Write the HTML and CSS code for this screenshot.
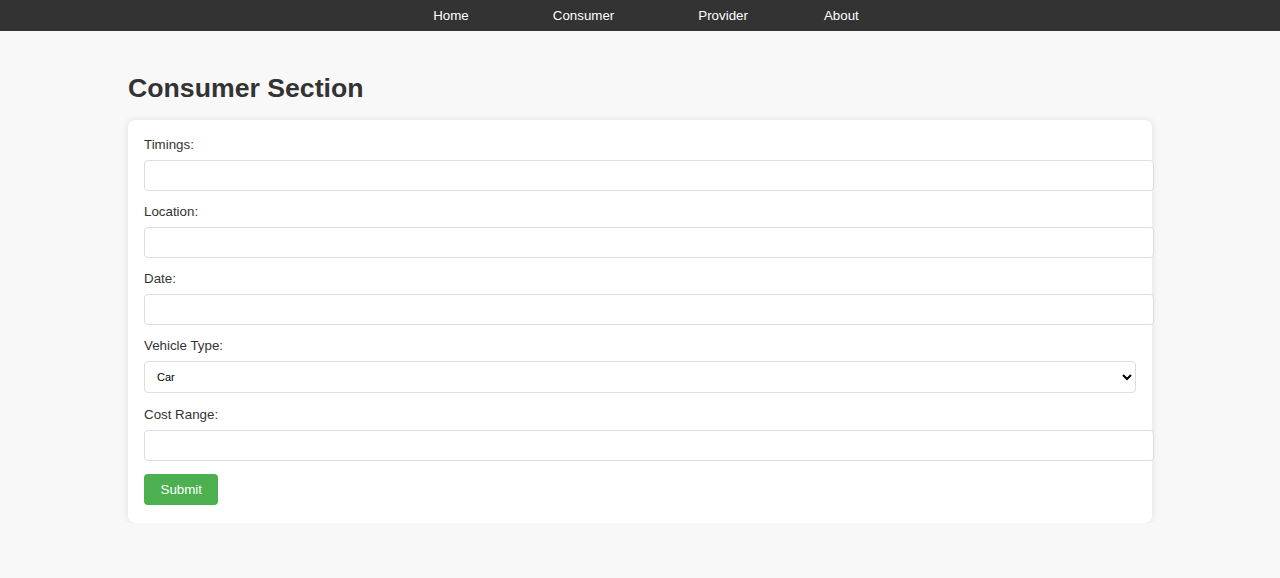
FILE: index.html
```html
<!DOCTYPE html>
<html lang="en">
<head>
    <meta charset="UTF-8">
    <meta name="viewport" content="width=device-width, initial-scale=1.0">
    <title>Consumer Section</title>
    <link rel="stylesheet" href="styles.css">
</head>
<body>
    <nav class="navbar">
        <ul class="nav-links">
            <li><a href="#">Home</a></li>
            <li><a href="#">Consumer</a></li>
            <li><a href="#">Provider</a></li>
            <li class="last"><a href="#">About</a></li>
        </ul>
    </nav>
    <main class="container">
        <h1>Consumer Section</h1>
        <form class="card">
            <label for="timings">Timings:</label>
            <input type="text" id="timings" name="timings">

            <label for="location">Location:</label>
            <input type="text" id="location" name="location">

            <label for="date">Date:</label>
            <input type="text" id="date" name="date">

            <label for="vehicle">Vehicle Type:</label>
            <select id="vehicle" name="vehicle">
                <option>Car</option>
                <option>Bike</option>
                <option>Truck</option>
            </select>

            <label for="cost">Cost Range:</label>
            <input type="text" id="cost" name="cost" class="last-input">

            <button type="submit" class="submit-btn">Submit</button>
        </form>
    </main>
</body>
</html>
```

FILE: styles.css
```css
* {
    margin: 0;
    padding: 0;
}
body {
    background-color: #f8f8f8;
    font-family: "Liberation Sans", Arial, sans-serif;
    font-size: 13.33px;
    color: #333;
}
.navbar {
    background-color: #333;
    height: 31px;
    display: flex;
    align-items: center;
    justify-content: center;
}
.nav-links {
    list-style: none;
    display: flex;
    gap: 84px;
    padding-left: 12px;
}
.nav-links .last {
    margin-left: -8px;
}
.nav-links a {
    color: #fff;
    text-decoration: none;
}
.container {
    width: 1024px;
    margin: 0 auto;
    padding-top: 42px;
}
h1 {
    font-size: 26.67px;
    color: #333;
    margin-bottom: 16px;
}
.card {
    background-color: #fff;
    padding: 17px 16px 18px;
    border-radius: 8px;
    box-shadow: 0 0 8px rgba(0, 0, 0, 0.1);
}
.card label {
    display: block;
    margin-bottom: 8px;
    color: #333;
}
.card input {
    display: block;
    width: 100%;
    height: 15px;
    padding: 7px 8px;
    border: 1px solid #ddd;
    border-radius: 4px;
    font-family: inherit;
    font-size: 13.33px;
    margin-bottom: 13px;
    background-color: #fff;
}
.card .last-input {
    height: 15.5px;
    margin-bottom: 12.5px;
}
.card select {
    display: block;
    width: 100%;
    height: 32px;
    padding: 0 8px;
    border: 1px solid #ddd;
    border-radius: 4px;
    font-family: "Liberation Sans", Arial, sans-serif;
    font-size: 11px;
    color: #000;
    background-color: #fff;
    margin-bottom: 13.5px;
}
.submit-btn {
    background-color: #4caf50;
    color: #fff;
    border: none;
    border-radius: 4px;
    padding: 8px 16.5px;
    font-family: inherit;
    font-size: 13.33px;
    line-height: normal;
    cursor: pointer;
}
.submit-btn:hover {
    background-color: #45a049;
}
```
